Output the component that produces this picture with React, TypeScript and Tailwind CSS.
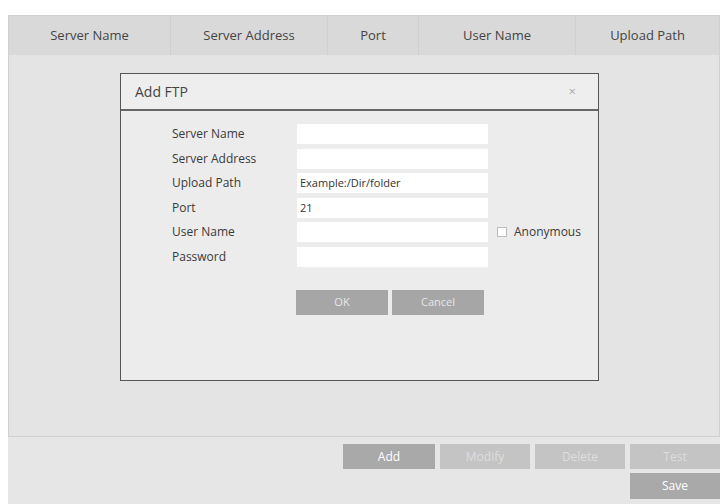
export default function App() {
  const f = { fontFamily: '"Open Sans", "DejaVu Sans", sans-serif' };
  const rows: [string, string][] = [
    ["Server Name", ""],
    ["Server Address", ""],
    ["Upload Path", "Example:/Dir/folder"],
    ["Port", "21"],
    ["User Name", ""],
    ["Password", ""],
  ];
  return (
    <div style={f} className="w-[720px] h-[504px] bg-white pt-[15px] pl-[8px] text-[#3a3a3a] overflow-hidden">
      <div className="h-[489px] bg-[#e6e6e6] flex flex-col">
        <div className="h-[422px] bg-[#e4e4e4] border border-[#d0d0d0] flex flex-col">
          <div className="h-[39px] bg-[#d9d9d9] flex text-[13px] font-medium text-[#444]">
            <div className="w-[162px] border-r border-[#cfcfcf] flex items-center justify-center">Server Name</div>
            <div className="w-[157px] border-r border-[#cfcfcf] flex items-center justify-center">Server Address</div>
            <div className="w-[91px] border-r border-[#cfcfcf] flex items-center justify-center">Port</div>
            <div className="w-[157px] border-r border-[#cfcfcf] flex items-center justify-center">User Name</div>
            <div className="flex-1 flex items-center justify-center">Upload Path</div>
          </div>
          <div className="pl-[111px] pt-[18px]">
            <div className="w-[479px] h-[308px] border border-[#555] bg-[#ececec] flex flex-col">
              <div className="h-[37px] border-b-2 border-[#666] flex items-center justify-between px-[14px] bg-[#eeeeee]">
                <span className="text-[14px] text-[#444]">Add FTP</span>
                <span className="text-[13px] text-[#aaa] mr-[8px]">×</span>
              </div>
              <div className="pt-[13px] pl-[51px] flex flex-col gap-[4px] text-[12px]">
                {rows.map(([l, v]) => (
                  <div key={l} className="flex items-center h-[20.5px]">
                    <div className="w-[125px]">{l}</div>
                    <div className="w-[191px] h-[20px] bg-white text-[11px] flex items-center pl-[3px] text-[#333]">{v}</div>
                    {l === "User Name" && (
                      <div className="flex items-center ml-[9px]">
                        <span className="w-[10px] h-[10px] border border-[#bbb] bg-white inline-block mr-[7px]" />
                        <span>Anonymous</span>
                      </div>
                    )}
                  </div>
                ))}
                <div className="flex gap-[4px] pl-[124px] mt-[19px] text-[11px] text-[#e6e6e6]">
                  <div className="w-[92px] h-[25px] bg-[#a6a6a6] flex items-center justify-center">OK</div>
                  <div className="w-[92px] h-[25px] bg-[#a6a6a6] flex items-center justify-center">Cancel</div>
                </div>
              </div>
            </div>
          </div>
        </div>
        <div className="flex justify-end gap-[5px] mt-[7px] text-[12px] text-white">
          <div className="w-[92px] h-[25px] bg-[#a9a9a9] flex items-center justify-center">Add</div>
          <div className="w-[90px] h-[25px] bg-[#c4c4c4] text-[#dedede] flex items-center justify-center">Modify</div>
          <div className="w-[90px] h-[25px] bg-[#c4c4c4] text-[#dedede] flex items-center justify-center">Delete</div>
          <div className="w-[90px] h-[25px] bg-[#c4c4c4] text-[#dedede] flex items-center justify-center">Test</div>
        </div>
        <div className="flex justify-end mt-[4px] text-[12px] text-white">
          <div className="w-[90px] h-[26px] bg-[#a9a9a9] flex items-center justify-center">Save</div>
        </div>
      </div>
    </div>
  );
}
